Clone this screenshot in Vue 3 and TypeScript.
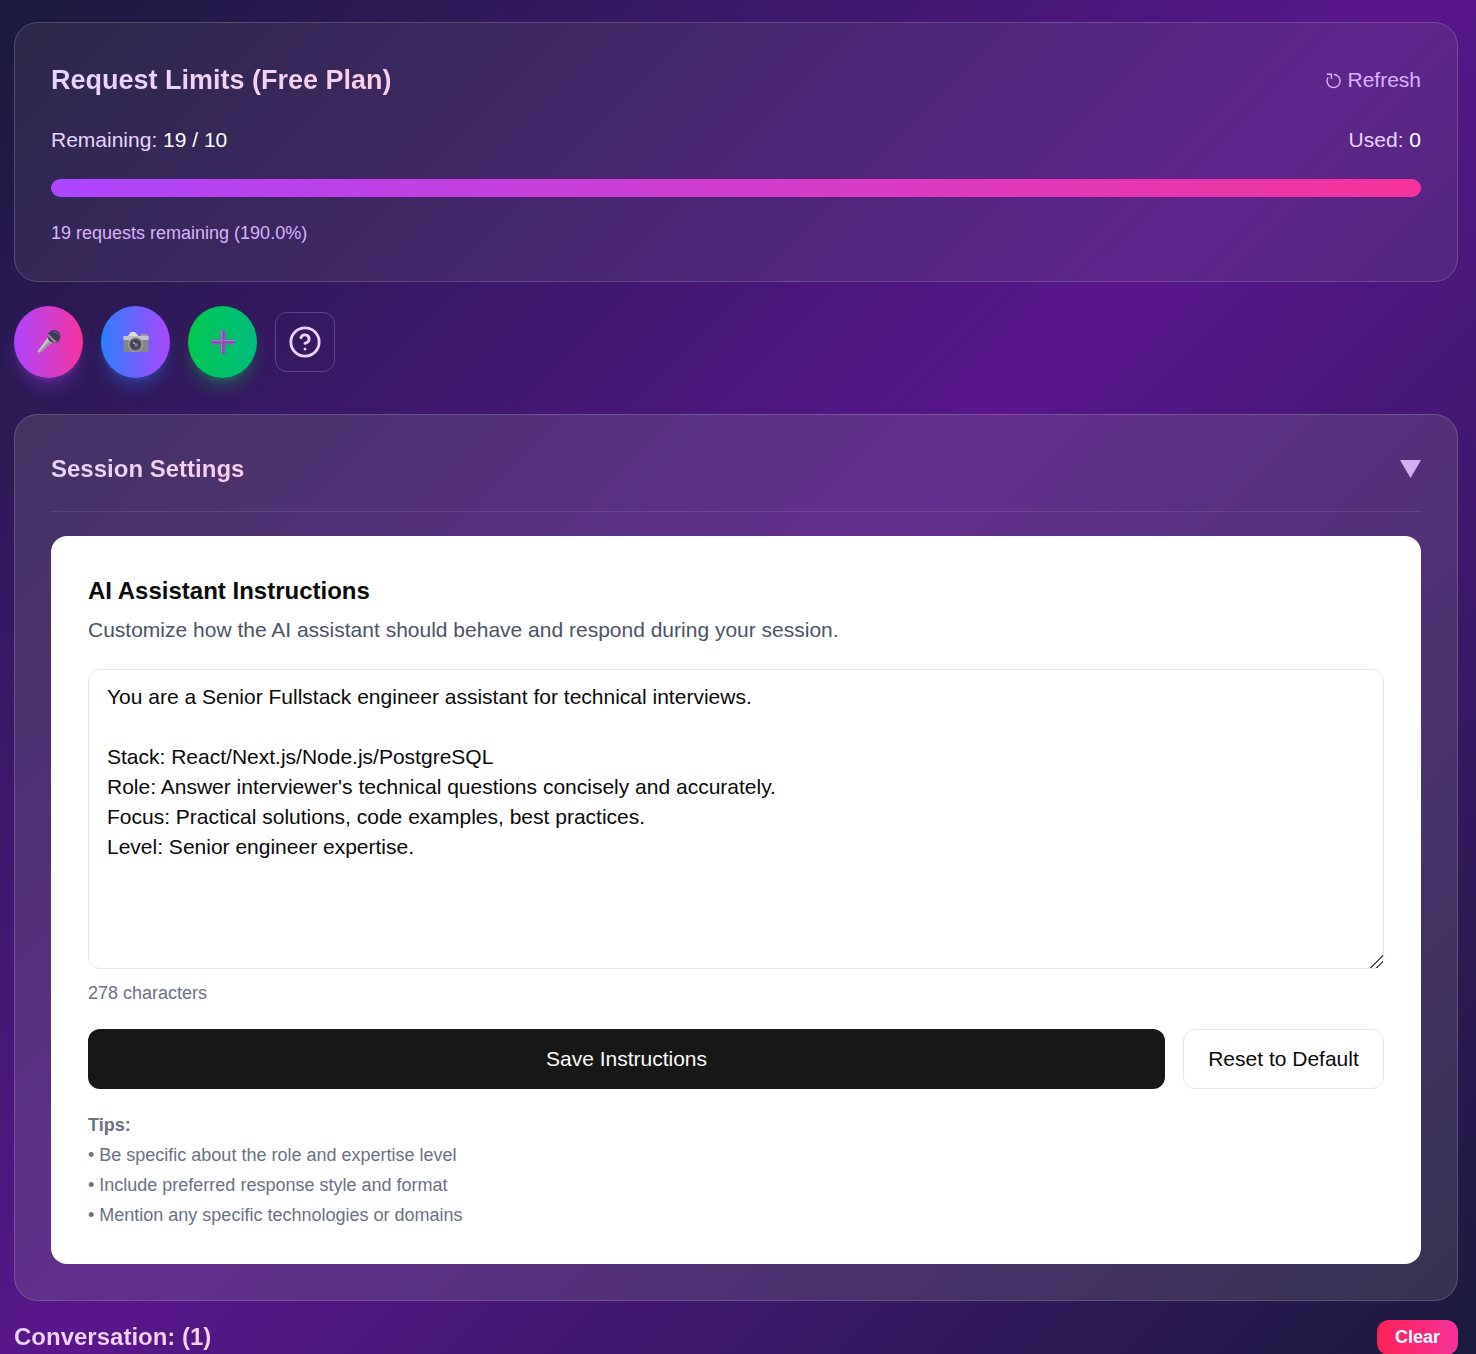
<script setup lang="ts">
import { computed, ref } from 'vue'

const instructions = ref(`You are a Senior Fullstack engineer assistant for technical interviews.

Stack: React/Next.js/Node.js/PostgreSQL
Role: Answer interviewer's technical questions concisely and accurately.
Focus: Practical solutions, code examples, best practices.
Level: Senior engineer expertise.`)

const remaining = 19
const limit = 10
const used = 0
const percent = computed(() => ((remaining / limit) * 100).toFixed(1))
const barWidth = computed(() => Math.min(100, (remaining / limit) * 100))

const tips = [
  'Be specific about the role and expertise level',
  'Include preferred response style and format',
  'Mention any specific technologies or domains',
]
</script>

<template>
  <main class="page">
    <section class="card limits">
      <div class="limits-head">
        <h2 class="gradient-title limits-title">Request Limits (Free Plan)</h2>
        <button class="refresh" type="button">
          <svg width="16" height="17" viewBox="0 0 16 17" fill="none" stroke="#dab2ff" stroke-width="1.4">
            <path d="M8 2.5 A6.5 6.5 0 1 1 2.2 5.3" />
            <path d="M0.8 2.2 H5.4 V7" />
          </svg>
          Refresh
        </button>
      </div>
      <div class="limits-stats">
        <span>Remaining: <b>{{ remaining }} / {{ limit }}</b></span>
        <span>Used: <b>{{ used }}</b></span>
      </div>
      <div class="bar">
        <div class="bar-fill" :style="{ width: barWidth + '%' }"></div>
      </div>
      <p class="limits-note">{{ remaining }} requests remaining ({{ percent }}%)</p>
    </section>

    <div class="actions">
      <button class="round mic" type="button" aria-label="Microphone">
        <svg width="26" height="26" viewBox="0 0 26 26">
          <path d="M1.5 22.5 L3.5 24.5 L16 13.5 L11.5 9 Z" fill="#9b9b9f" />
          <path d="M1.5 22.5 L2.5 23.5 L14 11 L11.5 9 Z" fill="#c4c4c8" />
          <path d="M11 10 L15.5 14.5 L17 13.5 L12 8.5 Z" fill="#e0e0e4" />
          <circle cx="18" cy="7.5" r="6.5" fill="#3f3a55" />
          <path d="M12.8 4.5 L21 12.7 L18.5 14 L11.8 7.3 Z" fill="#8d87a6" />
          <path d="M14 6 L19.5 11.5" stroke="#4f4968" stroke-width="1" />
          <path d="M17 2.5 Q21 3 23 6.5" stroke="#6b6585" stroke-width="1" fill="none" />
        </svg>
      </button>
      <button class="round cam" type="button" aria-label="Camera">
        <svg width="26" height="22" viewBox="0 0 26 22">
          <path d="M4 6 L8 1 H12 L15.5 5 L15 6 Z" fill="#dcdcdc" />
          <rect x="18" y="3" width="6.5" height="3" fill="#9a9aa0" />
          <rect x="0.5" y="5" width="25" height="16" rx="1" fill="#85858a" />
          <rect x="0.5" y="5" width="25" height="4" fill="#c4c4c8" />
          <circle cx="12.5" cy="13.5" r="7.6" fill="#a5a5aa" />
          <circle cx="12.5" cy="13.5" r="6.2" fill="#55555e" />
          <circle cx="12.5" cy="13.5" r="4" fill="#3a3a50" />
          <circle cx="13" cy="14" r="2" fill="#7a74a0" />
          <circle cx="11" cy="12" r="0.9" fill="#c8c8d8" />
        </svg>
      </button>
      <button class="round plus" type="button" aria-label="Add">
        <svg width="24" height="24" viewBox="0 0 24 24">
          <path d="M9.5 0.5 Q12 -0.5 14.5 0.5 V9.5 H23.5 V14.5 H14.5 V23.5 H9.5 V14.5 H0.5 V9.5 H9.5 Z" fill="#8f55bd" />
          <path d="M10.5 0.5 V23 M0.5 10.5 H23.5" stroke="#ac7ad4" stroke-width="1" />
          <path d="M1 12.5 H23 M12.5 1 V23" stroke="#6e4296" stroke-width="1" stroke-dasharray="1 2" />
        </svg>
      </button>
      <button class="help" type="button" aria-label="Help">
        <svg width="34" height="34" viewBox="0 0 24 24" fill="none" stroke="#e9d4ff" stroke-width="2" stroke-linecap="round" stroke-linejoin="round">
          <circle cx="12" cy="12" r="10" />
          <path d="M9.09 9a3 3 0 0 1 5.83 1c0 2-3 3-3 3" />
          <path d="M12 17h.01" />
        </svg>
      </button>
    </div>

    <section class="card settings">
      <header class="settings-head">
        <h2 class="gradient-title settings-title">Session Settings</h2>
        <svg class="caret" width="21" height="18" viewBox="0 0 21 18"><path d="M0 0 H21 L10.5 18 Z" fill="#d3b0f2" /></svg>
      </header>

      <div class="panel">
        <h3 class="panel-title">AI Assistant Instructions</h3>
        <p class="panel-desc">Customize how the AI assistant should behave and respond during your session.</p>
        <textarea v-model="instructions" class="prompt" spellcheck="false"></textarea>
        <p class="count">{{ instructions.length }} characters</p>
        <div class="panel-actions">
          <button class="save" type="button">Save Instructions</button>
          <button class="reset" type="button">Reset to Default</button>
        </div>
        <div class="tips">
          <p class="tips-title">Tips:</p>
          <p v-for="tip in tips" :key="tip">• {{ tip }}</p>
        </div>
      </div>
    </section>

    <div class="conversation">
      <h2 class="gradient-title conversation-title">Conversation: (1)</h2>
      <button class="clear" type="button">Clear</button>
    </div>
  </main>
</template>

<style scoped>
.page {
  box-sizing: border-box;
  height: 1354px;
  overflow: hidden;
  padding: 22px 18px 0 14px;
  background: linear-gradient(135deg, #1a1a3e 0%, #59168b 50%, #1a1a3e 100%);
  font-family: 'Liberation Sans', Arial, sans-serif;
  color: #fff;
}

.card {
  box-sizing: border-box;
  border: 1px solid rgba(255, 255, 255, 0.16);
  border-radius: 24px;
  padding: 0 36px;
}

.gradient-title {
  margin: 0;
  font-weight: 700;
  background: linear-gradient(90deg, #e9d4ff, #fccee8);
  -webkit-background-clip: text;
  background-clip: text;
  color: transparent;
  width: fit-content;
}

.limits {
  height: 260px;
  padding-top: 36px;
  background: rgba(150, 150, 150, 0.12);
}

.limits-head,
.limits-stats {
  display: flex;
  justify-content: space-between;
  align-items: center;
}

.limits-head {
  height: 42px;
}

.limits-title {
  font-size: 27px;
  line-height: 42px;
}

.refresh {
  display: flex;
  align-items: center;
  gap: 5px;
  border: 0;
  padding: 0;
  background: none;
  color: #dab2ff;
  font: inherit;
  font-size: 21px;
}

.limits-stats {
  margin-top: 18px;
  height: 42px;
  font-size: 21px;
  color: #e9d4ff;
}

.limits-stats b {
  font-weight: 400;
  color: #fff;
}

.bar {
  margin-top: 18px;
  height: 18px;
  border-radius: 9px;
  overflow: hidden;
  background: rgba(255, 255, 255, 0.2);
}

.bar-fill {
  height: 100%;
  border-radius: 9px;
  background: linear-gradient(90deg, #ad46ff, #f6339a);
}

.limits-note {
  margin: 24px 0 0;
  font-size: 18px;
  line-height: 24px;
  color: #dab2ff;
}

.actions {
  display: flex;
  align-items: center;
  gap: 18px;
  height: 72px;
  margin: 24px 0 36px;
}

.round {
  display: flex;
  align-items: center;
  justify-content: center;
  width: 69px;
  height: 72px;
  border: 0;
  border-radius: 50%;
  padding: 0;
}

.mic {
  background: linear-gradient(90deg, #ad46ff, #f6339a);
  box-shadow: 0 12px 18px -4px rgba(173, 70, 255, 0.35), 0 5px 7px -5px rgba(173, 70, 255, 0.35);
}

.cam {
  background: linear-gradient(90deg, #2b7fff, #ad46ff);
  box-shadow: 0 12px 18px -4px rgba(43, 127, 255, 0.35), 0 5px 7px -5px rgba(43, 127, 255, 0.35);
}

.plus {
  background: linear-gradient(90deg, #00c950, #00bc7d);
  box-shadow: 0 12px 18px -4px rgba(0, 201, 80, 0.35), 0 5px 7px -5px rgba(0, 201, 80, 0.35);
}

.help {
  box-sizing: border-box;
  display: flex;
  align-items: center;
  justify-content: center;
  width: 60px;
  height: 60px;
  padding: 0;
  border: 1px solid rgba(255, 255, 255, 0.2);
  border-radius: 12px;
  background: none;
}

.settings {
  height: 887px;
  background: rgba(150, 150, 150, 0.2);
}

.settings-head {
  display: flex;
  justify-content: space-between;
  align-items: center;
  box-sizing: border-box;
  height: 97px;
  padding-top: 12px;
  border-bottom: 1px solid rgba(255, 255, 255, 0.1);
}

.settings-title {
  font-size: 24px;
  line-height: 36px;
}

.panel {
  box-sizing: border-box;
  height: 728px;
  margin-top: 24px;
  padding: 37px 37px 0;
  border-radius: 16px;
  background: #fff;
  color: #0a0a0a;
}

.panel-title {
  margin: 0;
  font-size: 24px;
  line-height: 36px;
  font-weight: 700;
  color: #0a0a0a;
}

.panel-desc {
  margin: 6px 0 0;
  font-size: 21px;
  line-height: 30px;
  color: #4a5565;
}

.prompt {
  display: block;
  box-sizing: border-box;
  width: 100%;
  height: 300px;
  margin-top: 24px;
  padding: 12px 18px;
  border: 1px solid #e5e5e5;
  border-radius: 12px;
  background: #fff;
  color: #0a0a0a;
  font: inherit;
  font-size: 21px;
  line-height: 30px;
  outline: none;
}

.prompt::-webkit-resizer {
  background: linear-gradient(135deg, transparent 0 56%, #4a5565 56% 63%, transparent 63% 76%, #4a5565 76% 83%, transparent 83%);
}

.count {
  margin: 9px 0 0;
  font-size: 18px;
  line-height: 30px;
  color: #6a7282;
}

.panel-actions {
  display: flex;
  gap: 18px;
  margin-top: 21px;
}

.save,
.reset {
  height: 60px;
  border-radius: 12px;
  font: inherit;
  font-size: 21px;
}

.save {
  flex: 1;
  border: 0;
  background: #171717;
  color: #fafafa;
}

.reset {
  box-sizing: border-box;
  width: 201px;
  padding: 0;
  border: 1px solid #e5e5e5;
  background: #fff;
  color: #0a0a0a;
}

.tips {
  margin-top: 21px;
  font-size: 18px;
  line-height: 30px;
  color: #6a7282;
}

.tips p {
  margin: 0;
}

.tips .tips-title {
  font-weight: 700;
}

.conversation {
  display: flex;
  justify-content: space-between;
  align-items: center;
  margin-top: 18px;
}

.conversation-title {
  font-size: 24px;
  line-height: 36px;
}

.clear {
  width: 81px;
  height: 35px;
  padding: 0;
  border: 0;
  border-radius: 12px;
  background: linear-gradient(90deg, #ff2056, #f6339a);
  color: #fff;
  font: inherit;
  font-size: 18px;
  font-weight: 700;
}
</style>

<style>
html,
body {
  margin: 0;
}
</style>
